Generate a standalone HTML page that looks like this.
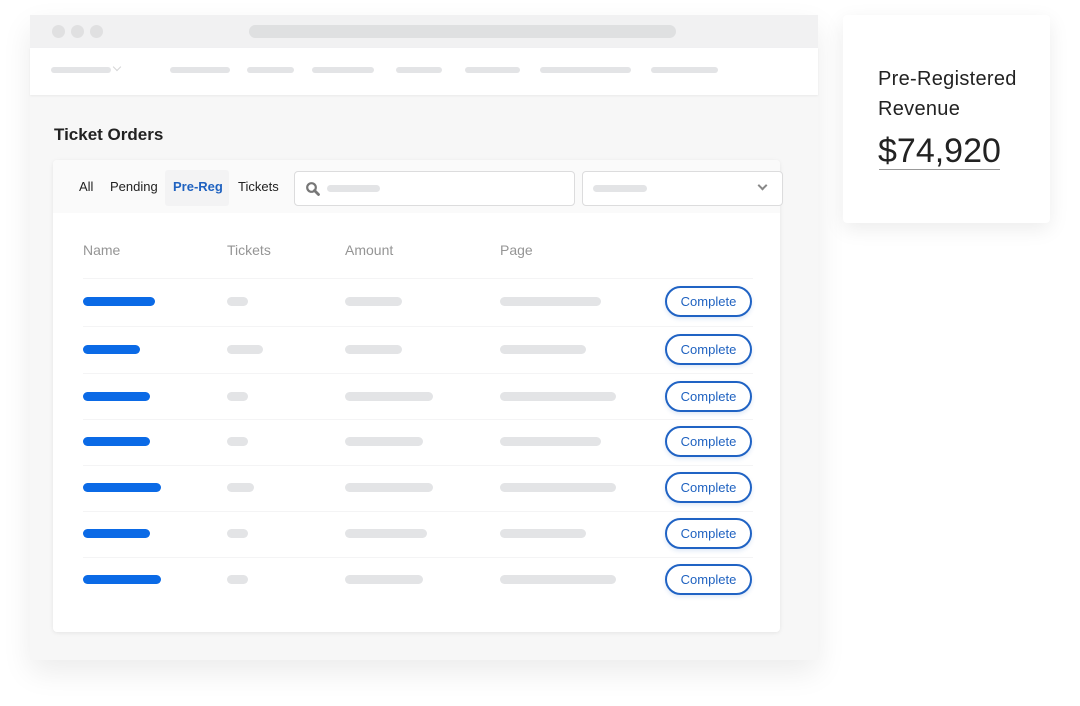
<!DOCTYPE html>
<html><head><meta charset="utf-8"><style>
*{margin:0;padding:0;box-sizing:border-box}
body{width:1080px;height:706px;background:#fff;position:relative;overflow:hidden;font-family:"Liberation Sans",sans-serif}
.a{position:absolute}
.b{position:absolute;border-radius:5px}
.g{background:#e3e4e6}
.n{background:#0b6ae6}
.btn{position:absolute;left:665px;width:87px;height:31px;border:2px solid #2063c4;border-radius:16px;color:#1f62c0;font-size:13px;text-align:center;line-height:27px;background:#fff;box-shadow:0 2px 4px rgba(32,99,196,.15)}
.sep{position:absolute;left:83px;width:670px;height:1px;background:#f4f4f5}
.h{position:absolute;top:242px;font-size:14px;color:#959595}
</style></head><body>
<div class="a" style="left:30px;top:15px;width:788px;height:645px;background:#f7f7f7;box-shadow:0 12px 30px rgba(0,0,0,.08);border-radius:3px"></div>
<div class="a" style="left:30px;top:15px;width:788px;height:33px;background:#f1f1f2"></div>
<div class="a" style="left:52px;top:25px;width:13px;height:13px;border-radius:50%;background:#e0e0e1"></div>
<div class="a" style="left:71px;top:25px;width:13px;height:13px;border-radius:50%;background:#e0e0e1"></div>
<div class="a" style="left:90px;top:25px;width:13px;height:13px;border-radius:50%;background:#e0e0e1"></div>
<div class="b" style="left:249px;top:25px;width:427px;height:13px;border-radius:7px;background:#dfe0e1"></div>
<div class="a" style="left:30px;top:48px;width:788px;height:47px;background:#fff;box-shadow:0 1px 2px rgba(0,0,0,.06)"></div>
<div class="b g" style="left:51px;top:67px;width:60px;height:6px;border-radius:3px"></div>
<div class="a" style="left:114px;top:64px;width:6px;height:6px;border-right:1.5px solid #d5d5d6;border-bottom:1.5px solid #d5d5d6;transform:rotate(45deg)"></div>
<div class="b g" style="left:170px;top:67px;width:60px;height:6px;border-radius:3px"></div>
<div class="b g" style="left:247px;top:67px;width:47px;height:6px;border-radius:3px"></div>
<div class="b g" style="left:312px;top:67px;width:62px;height:6px;border-radius:3px"></div>
<div class="b g" style="left:396px;top:67px;width:46px;height:6px;border-radius:3px"></div>
<div class="b g" style="left:465px;top:67px;width:55px;height:6px;border-radius:3px"></div>
<div class="b g" style="left:540px;top:67px;width:91px;height:6px;border-radius:3px"></div>
<div class="b g" style="left:651px;top:67px;width:67px;height:6px;border-radius:3px"></div>
<div class="a" style="left:54px;top:125px;font-size:17px;font-weight:bold;color:#222">Ticket Orders</div>
<div class="a" style="left:53px;top:160px;width:727px;height:472px;background:#fff;border-radius:4px;box-shadow:0 1px 4px rgba(0,0,0,.08)"></div>
<div class="a" style="left:53px;top:160px;width:727px;height:53px;background:#fafafa;border-radius:4px 4px 0 0"></div>
<div class="a" style="left:79px;top:179px;font-size:13px;color:#222">All</div>
<div class="a" style="left:110px;top:179px;font-size:13px;color:#222">Pending</div>
<div class="a" style="left:165px;top:170px;width:64px;height:36px;background:#f3f3f4;border-radius:3px"></div>
<div class="a" style="left:173px;top:179px;font-size:13px;color:#1f62c0;font-weight:bold">Pre-Reg</div>
<div class="a" style="left:238px;top:179px;font-size:13px;color:#222">Tickets</div>
<div class="a" style="left:294px;top:171px;width:281px;height:35px;background:#fff;border:1px solid #dcdcdd;border-radius:4px"></div>
<svg class="a" style="left:305px;top:181px" width="16" height="16" viewBox="0 0 16 16"><circle cx="6.5" cy="6.5" r="4.3" fill="none" stroke="#777" stroke-width="2.2"/><path d="M9.5 9.5l4 4" stroke="#777" stroke-width="2.8" stroke-linecap="round"/></svg>
<div class="b g" style="left:327px;top:185px;width:53px;height:7px;border-radius:4px"></div>
<div class="a" style="left:582px;top:171px;width:201px;height:35px;background:#fff;border:1px solid #dcdcdd;border-radius:4px"></div>
<div class="b g" style="left:593px;top:185px;width:54px;height:7px;border-radius:4px"></div>
<div class="a" style="left:759px;top:182px;width:7px;height:7px;border-right:2px solid #888;border-bottom:2px solid #888;transform:rotate(45deg)"></div>
<div class="h" style="left:83px">Name</div>
<div class="h" style="left:227px">Tickets</div>
<div class="h" style="left:345px">Amount</div>
<div class="h" style="left:500px">Page</div>
<div class="sep" style="top:278px"></div><div class="sep" style="top:326px"></div><div class="sep" style="top:373px"></div><div class="sep" style="top:419px"></div><div class="sep" style="top:465px"></div><div class="sep" style="top:511px"></div><div class="sep" style="top:557px"></div>
<div class="b n" style="left:83px;top:297px;width:72px;height:9px"></div><div class="b g" style="left:227px;top:297px;width:21px;height:9px"></div><div class="b g" style="left:345px;top:297px;width:57px;height:9px"></div><div class="b g" style="left:500px;top:297px;width:101px;height:9px"></div><div class="btn" style="top:286px">Complete</div>
<div class="b n" style="left:83px;top:345px;width:57px;height:9px"></div><div class="b g" style="left:227px;top:345px;width:36px;height:9px"></div><div class="b g" style="left:345px;top:345px;width:57px;height:9px"></div><div class="b g" style="left:500px;top:345px;width:86px;height:9px"></div><div class="btn" style="top:334px">Complete</div>
<div class="b n" style="left:83px;top:392px;width:67px;height:9px"></div><div class="b g" style="left:227px;top:392px;width:21px;height:9px"></div><div class="b g" style="left:345px;top:392px;width:88px;height:9px"></div><div class="b g" style="left:500px;top:392px;width:116px;height:9px"></div><div class="btn" style="top:381px">Complete</div>
<div class="b n" style="left:83px;top:437px;width:67px;height:9px"></div><div class="b g" style="left:227px;top:437px;width:21px;height:9px"></div><div class="b g" style="left:345px;top:437px;width:78px;height:9px"></div><div class="b g" style="left:500px;top:437px;width:101px;height:9px"></div><div class="btn" style="top:426px">Complete</div>
<div class="b n" style="left:83px;top:483px;width:78px;height:9px"></div><div class="b g" style="left:227px;top:483px;width:27px;height:9px"></div><div class="b g" style="left:345px;top:483px;width:88px;height:9px"></div><div class="b g" style="left:500px;top:483px;width:116px;height:9px"></div><div class="btn" style="top:472px">Complete</div>
<div class="b n" style="left:83px;top:529px;width:67px;height:9px"></div><div class="b g" style="left:227px;top:529px;width:21px;height:9px"></div><div class="b g" style="left:345px;top:529px;width:82px;height:9px"></div><div class="b g" style="left:500px;top:529px;width:86px;height:9px"></div><div class="btn" style="top:518px">Complete</div>
<div class="b n" style="left:83px;top:575px;width:78px;height:9px"></div><div class="b g" style="left:227px;top:575px;width:21px;height:9px"></div><div class="b g" style="left:345px;top:575px;width:78px;height:9px"></div><div class="b g" style="left:500px;top:575px;width:116px;height:9px"></div><div class="btn" style="top:564px">Complete</div>
<div class="a" style="left:843px;top:15px;width:207px;height:208px;background:#fff;border-radius:4px;box-shadow:0 6px 20px rgba(0,0,0,.08)"></div>
<div class="a" style="left:878px;top:64px;font-size:20px;line-height:30px;color:#222;letter-spacing:0.3px">Pre-Registered<br>Revenue</div>
<div class="a" style="left:878px;top:131px;font-size:34px;color:#222;line-height:40px">$74,920</div>
<div class="a" style="left:879px;top:169px;width:121px;height:1px;background:#999"></div>
</body></html>
